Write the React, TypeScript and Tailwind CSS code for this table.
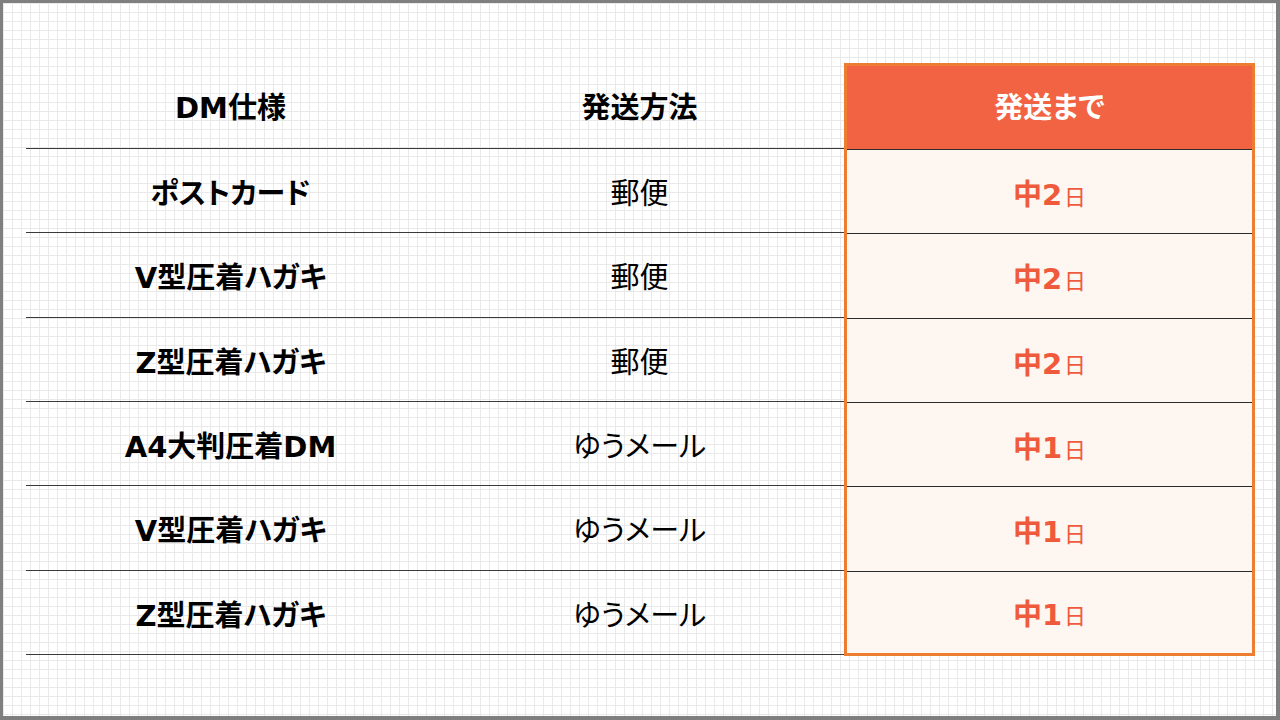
import React from 'react';

const ROWS = [
  { spec: 'ポストカード', method: '郵便', days: '2' },
  { spec: 'V型圧着ハガキ', method: '郵便', days: '2' },
  { spec: 'Z型圧着ハガキ', method: '郵便', days: '2' },
  { spec: 'A4大判圧着DM', method: 'ゆうメール', days: '1' },
  { spec: 'V型圧着ハガキ', method: 'ゆうメール', days: '1' },
  { spec: 'Z型圧着ハガキ', method: 'ゆうメール', days: '1' },
];

const font = { fontFamily: '"DejaVu Sans", "Noto Sans CJK JP", sans-serif' };

export default function App() {
  return (
    <div
      className="w-[1280px] h-[720px] border-t-[3px] border-l-[3px] border-r-4 border-b-4 border-[#7f7f7f] bg-white bg-[linear-gradient(to_right,#e9e9e9_1px,transparent_1px),linear-gradient(to_bottom,#e9e9e9_1px,transparent_1px)] bg-[size:9px_9px] pt-[60px] pl-[23px] [font-feature-settings:'palt']"
      style={font}
    >
      <div className="flex">
        {/* left columns */}
        <div className="w-[818px] flex flex-col">
          <div className="grid grid-cols-2 h-[86px] pt-[6px] border-b border-[#3a3a3a] text-[29px] font-bold text-black">
            <div className="flex items-center justify-center">DM仕様</div>
            <div className="flex items-center justify-center">発送方法</div>
          </div>
          {ROWS.map((r, i) => (
            <div key={i} className="grid grid-cols-2 h-[84.33px] pt-[8px] border-b border-[#3a3a3a] text-[29px] text-black">
              <div className="flex items-center justify-center font-bold">{r.spec}</div>
              <div className="flex items-center justify-center">{r.method}</div>
            </div>
          ))}
        </div>

        {/* highlighted column */}
        <div className="w-[411px] border-[3px] border-[#ed7d31] flex flex-col">
          <div className="h-[83px] pt-[2px] bg-[#f26343] flex items-center justify-center text-white text-[29px] font-bold">
            発送まで
          </div>
          {ROWS.map((r, i) => (
            <div
              key={i}
              className={`${i === ROWS.length - 1 ? 'h-[82.33px] pt-[6px]' : 'h-[84.33px] pt-[8px]'} border-t border-[#2b2b2b] bg-[#fef6f0] flex items-center justify-center text-[#f05a3c]`}
            >
              <span className="text-[29px] font-bold">中{r.days}</span>
              <span className="text-[22px] ml-[2px] mt-[3px]">日</span>
            </div>
          ))}
        </div>
      </div>
    </div>
  );
}
